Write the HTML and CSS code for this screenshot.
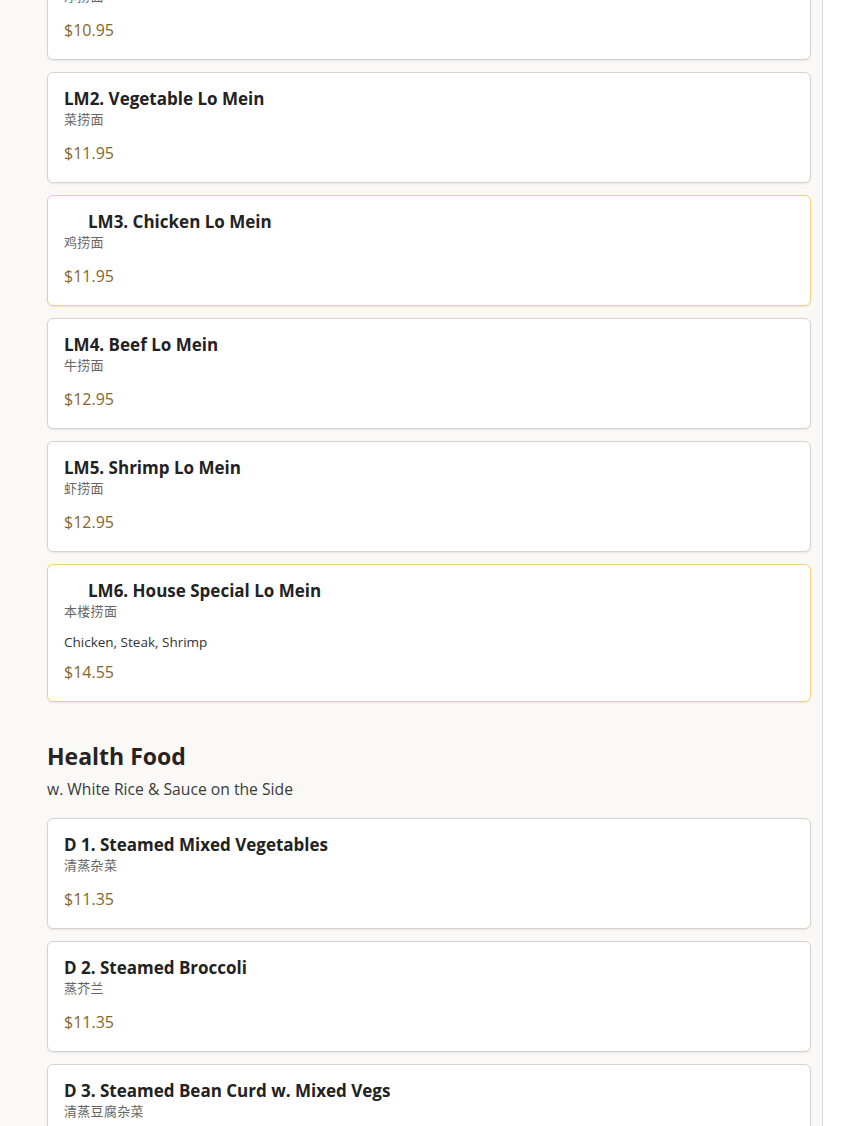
FILE: index.html
```html
<!DOCTYPE html>
<html lang="en">
<head>
<meta charset="utf-8">
<title>Menu</title>
<link rel="stylesheet" href="styles.css">
</head>
<body>
<main class="menu">
  <section class="section first">
    <div class="list">
      <article class="card">
        <h3 class="name">LM1. Plain Lo Mein</h3>
        <div class="zh">净捞面</div>
        <div class="price">$10.95</div>
      </article>
      <article class="card">
        <h3 class="name">LM2. Vegetable Lo Mein</h3>
        <div class="zh">菜捞面</div>
        <div class="price">$11.95</div>
      </article>
      <article class="card featured">
        <h3 class="name"><span class="mark"></span>LM3. Chicken Lo Mein</h3>
        <div class="zh">鸡捞面</div>
        <div class="price">$11.95</div>
      </article>
      <article class="card">
        <h3 class="name">LM4. Beef Lo Mein</h3>
        <div class="zh">牛捞面</div>
        <div class="price">$12.95</div>
      </article>
      <article class="card">
        <h3 class="name">LM5. Shrimp Lo Mein</h3>
        <div class="zh">虾捞面</div>
        <div class="price">$12.95</div>
      </article>
      <article class="card featured">
        <h3 class="name"><span class="mark"></span>LM6. House Special Lo Mein</h3>
        <div class="zh">本楼捞面</div>
        <p class="desc">Chicken, Steak, Shrimp</p>
        <div class="price">$14.55</div>
      </article>
    </div>
  </section>

  <section class="section">
    <h2 class="section-title">Health Food</h2>
    <p class="section-sub">w. White Rice &amp; Sauce on the Side</p>
    <div class="list">
      <article class="card">
        <h3 class="name">D 1. Steamed Mixed Vegetables</h3>
        <div class="zh">清蒸杂菜</div>
        <div class="price">$11.35</div>
      </article>
      <article class="card">
        <h3 class="name">D 2. Steamed Broccoli</h3>
        <div class="zh">蒸芥兰</div>
        <div class="price">$11.35</div>
      </article>
      <article class="card">
        <h3 class="name">D 3. Steamed Bean Curd w. Mixed Vegs</h3>
        <div class="zh">清蒸豆腐杂菜</div>
        <div class="price">$11.35</div>
      </article>
    </div>
  </section>
</main>
</body>
</html>
```

FILE: styles.css
```css
html, body {
  margin: 0;
  padding: 0;
  background: #ffffff;
}

body {
  font-family: "Open Sans", "Noto Sans", "Noto Sans CJK SC", sans-serif;
  color: #222222;
  height: 1126px;
  overflow: hidden;
}

.menu {
  width: 823px;
  min-height: 1300px;
  box-sizing: border-box;
  padding: 0 11px 0 47px;
  background: #faf9f7;
  border-right: 1px solid #d9d9d9;
}

.section.first {
  margin-top: -51px;
}

.list {
  display: flex;
  flex-direction: column;
  gap: 12px;
}

.card {
  background: #ffffff;
  border: 1px solid #d4d4d4;
  border-radius: 6px;
  padding: 16px;
  box-shadow: 0 1px 2px rgba(0, 0, 0, 0.08);
}

.card.featured {
  border-color: #f1d27a;
}

.name {
  margin: 0;
  font-size: 17px;
  font-weight: 700;
  line-height: 20px;
  color: #222222;
  display: flex;
  align-items: center;
}

.mark {
  display: inline-block;
  width: 24px;
  height: 16px;
  flex: none;
}

.zh {
  font-family: "Noto Sans CJK SC", sans-serif;
  font-size: 13px;
  line-height: 20px;
  color: #666666;
  letter-spacing: 0.3px;
}

.desc {
  margin: 12px 0 0;
  font-size: 13.5px;
  line-height: 18px;
  color: #333333;
}

.price {
  margin-top: 12px;
  font-size: 16px;
  line-height: 25px;
  color: #85672d;
}

.desc + .price {
  margin-top: 9px;
}

.section-title {
  margin: 38px 0 0;
  font-size: 23px;
  line-height: 32px;
  font-weight: 700;
  color: #2a2220;
}

.section-sub {
  margin: 6px 0 18px;
  font-size: 15.7px;
  line-height: 22px;
  color: #3a3a3a;
}
```
